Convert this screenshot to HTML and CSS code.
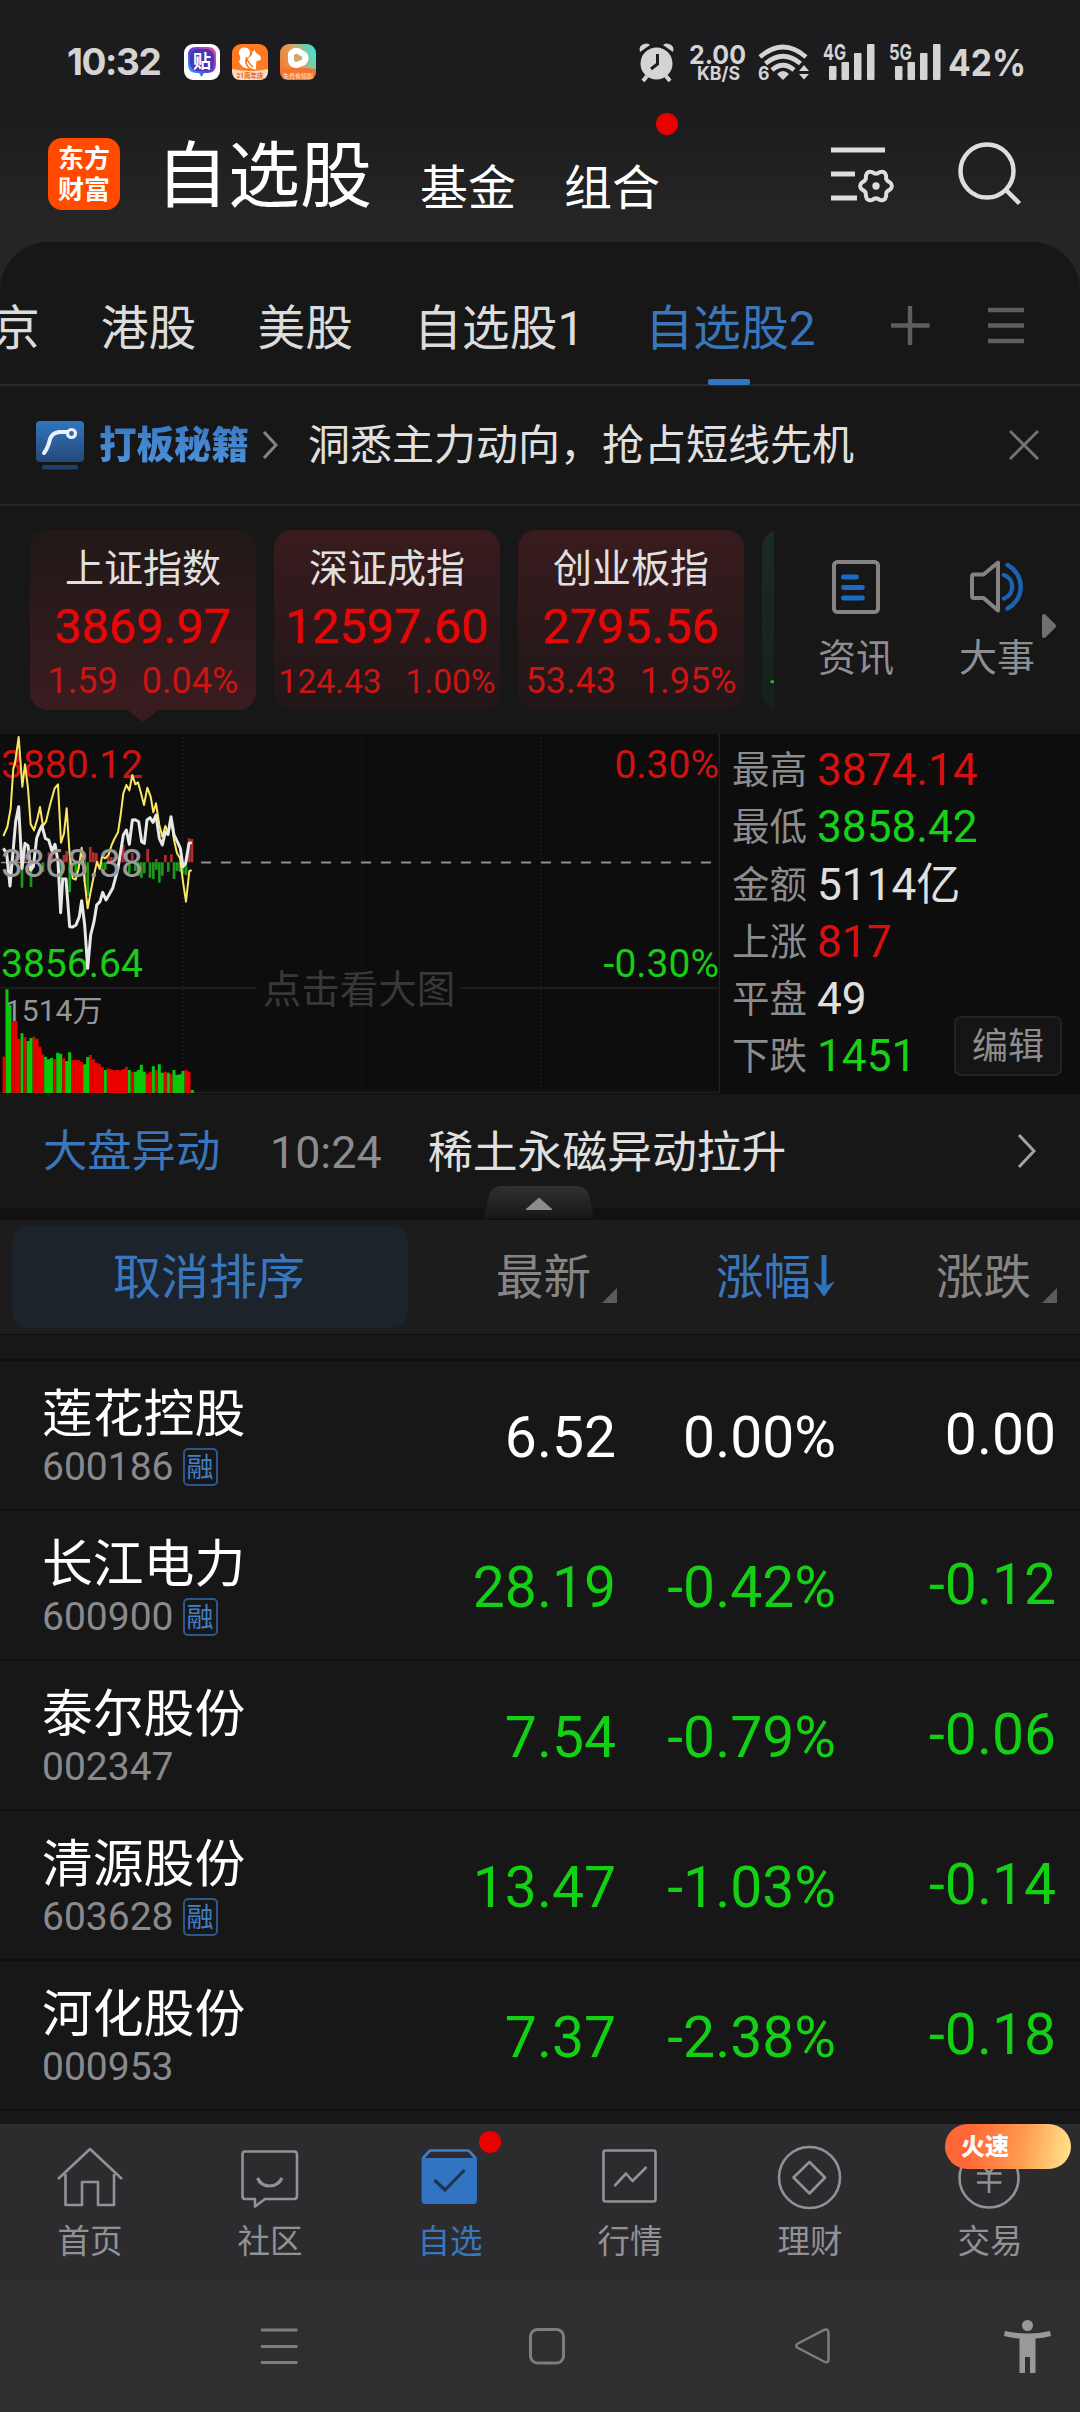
FILE: index.html
```html
<!DOCTYPE html>
<html lang="zh-CN">
<head>
<meta charset="utf-8">
<title>自选股</title>
<link rel="stylesheet" href="styles.css">
</head>
<body>
<div class="top">
  <div class="status">
    <span class="clock">10:32</span>
    <div class="apps">
      <svg width="36" height="36" viewBox="0 0 36 36">
        <defs><linearGradient id="tb" x1="0" y1="1" x2="1" y2="0"><stop offset="0" stop-color="#19b4ff"/><stop offset=".5" stop-color="#5a3be0"/><stop offset="1" stop-color="#ff4f8a"/></linearGradient></defs>
        <rect width="36" height="36" rx="9" fill="#fff"/>
        <path d="M12 3H24Q32 3 32 11V20Q32 28.500 24 29H20L17.500 33L15 29H12Q4 28.500 4 20V11Q4 3 12 3Z" fill="url(#tb)"/>
        <rect x="6" y="5" width="24" height="22" rx="8" fill="#4a35b4"/>
        <text x="18" y="23.500" font-size="18" text-anchor="middle" fill="#fff" class="b">贴</text>
      </svg>
      <svg width="36" height="36" viewBox="0 0 36 36">
        <rect width="36" height="36" rx="9" fill="#ff7b22"/>
        <path d="M0 25Q18 29 36 25V27Q36 36 27 36H9Q0 36 0 27Z" fill="#ffd9bd"/>
        <path d="M7 8Q8 3 13 3.500Q18 4 18 9Q17.500 13 13 15.500Q12.500 21 17 24.500Q9 24 7 17.500Q9 14.500 8 12Q6.500 10 7 8Z" fill="#fff"/>
        <path d="M20 11Q19.500 7 22.500 6Q23.500 9.500 26.500 10.500Q30 13 28.500 15.500Q26.500 17.500 24.500 16.500Q24 21 24 25.500Q17 25 15 19.500Q14.500 14.500 20 11Z" fill="#fff"/>
        <path d="M14 13Q17 20 21 23" fill="none" stroke="#ff7b22" stroke-width="1.500"/>
        <text x="18" y="33.500" font-size="6.500" text-anchor="middle" fill="#e8641c" class="b">21周年庆</text>
      </svg>
      <svg width="36" height="36" viewBox="0 0 36 36">
        <defs><linearGradient id="vd" x1="0" y1=".6" x2="1" y2=".2"><stop offset="0" stop-color="#f47a35"/><stop offset=".45" stop-color="#dca35f"/><stop offset=".9" stop-color="#52dcc4"/></linearGradient></defs>
        <rect width="36" height="36" rx="9" fill="url(#vd)"/>
        <path d="M0 25Q18 22 36 25V27Q36 36 27 36H9Q0 36 0 27Z" fill="#f47330"/>
        <path d="M13 8Q15 6 18 7L24 10.500Q27 14 24 18L17 21Q12 21 11 17V11Q11 9 13 8Z" fill="none" stroke="#fff" stroke-width="6"/>
        <text x="18" y="33.500" font-size="6" text-anchor="middle" fill="#ffe2cf">免费看短剧</text>
      </svg>
    </div>
    <svg class="sys" width="400" height="44" viewBox="636 40 400 44" fill="#d4d4d4">
      <circle cx="656.500" cy="63.500" r="16"/>
      <path d="M647 76L643 81M666 76L670 81" stroke="#d4d4d4" stroke-width="4"/>
      <path d="M640 52Q638 46 644 44Q648 42.500 650 45ZM673 52Q675 46 669 44Q665 42.500 663 45Z"/>
      <path d="M657.500 54V64L651 69" fill="none" stroke="#1c1c1e" stroke-width="3"/>
      <text x="689" y="63.500" font-size="26" textLength="57" lengthAdjust="spacingAndGlyphs" class="s">2.00</text>
      <text x="697" y="79.500" font-size="18.500" textLength="43" lengthAdjust="spacingAndGlyphs" class="s">KB/S</text>
      <g fill="none" stroke="#d4d4d4" stroke-width="4.600">
        <path d="M760 57Q783 37 806 57M765.500 63.500Q783 49 800.500 63.500M772 70Q783 60.500 794 70"/>
      </g>
      <path d="M777 74Q783 68 789 74L783 80ZM804 65L809 71H799ZM799 74H809L804 79.500Z"/>
      <text x="758" y="80" font-size="19" textLength="11.500" lengthAdjust="spacingAndGlyphs" class="s">6</text>
      <text x="823" y="59.500" font-size="22" textLength="23" lengthAdjust="spacingAndGlyphs" class="s">4G</text>
      <text x="889" y="59.500" font-size="22" textLength="23" lengthAdjust="spacingAndGlyphs" class="s">5G</text>
      <g id="bars"><rect x="829" y="66" width="7.500" height="14" rx="1"/><rect x="841.500" y="62" width="7.500" height="18" rx="1"/><rect x="854" y="53" width="7.500" height="27" rx="1"/><rect x="867" y="44" width="7.500" height="36" rx="1"/></g>
      <use href="#bars" x="66"/>
      <text x="948" y="76" font-size="37" textLength="78" lengthAdjust="spacingAndGlyphs" class="s">42%</text>
    </svg>
  </div>
  <header class="head">
    <div class="logo"><span>东方</span><span>财富</span></div>
    <h1>自选股</h1>
    <span class="seg">基金</span>
    <span class="seg dotted">组合<i class="dot"></i></span>
    <svg class="tool" width="68" height="64" viewBox="828 142 68 64" fill="none" stroke="#dedede">
      <path d="M831 150H885M831 174H855M831 198H857" stroke-width="5"/>
      <g transform="translate(876 186)"><path stroke-width="4" d="M13.800 -3.700Q18 0 13.800 3.700Q9.500 5.500 10.100 10.100Q9 15.600 3.700 13.800Q0 11 -3.700 13.800Q-9 15.600 -10.100 10.100Q-9.500 5.500 -13.800 3.700Q-18 0 -13.800 -3.700Q-9.500 -5.500 -10.100 -10.100Q-9 -15.600 -3.700 -13.800Q0 -11 3.700 -13.800Q9 -15.600 10.100 -10.100Q9.500 -5.500 13.800 -3.700Z"/><circle r="3.700" fill="#dedede" stroke="none"/></g>
    </svg>
    <svg class="tool2" width="68" height="68" viewBox="956 140 68 68" fill="none" stroke="#dedede" stroke-width="4.500">
      <circle cx="987" cy="171" r="26.500"/><path d="M1006 190L1019.500 203.500"/>
    </svg>
  </header>
</div>

<main class="panel">
  <nav class="tabs">
    <span>京</span><span>港股</span><span>美股</span><span>自选股1</span><span class="on">自选股2</span>
    <svg width="136" height="42" viewBox="892 304 136 42" stroke="#5e5e5e" stroke-width="4.400"><path d="M893 325.500H931.500M912 306V345M990 310H1026M990 325.500H1026M990 341H1026"/></svg>
  </nav>

  <div class="promo">
    <svg width="50" height="50" viewBox="0 0 50 50">
      <defs><linearGradient id="pg" x1="0" y1="0" x2="0" y2="1"><stop offset="0" stop-color="#3175c0"/><stop offset="1" stop-color="#24497a"/></linearGradient></defs>
      <rect x="1" y="1" width="48" height="41" rx="4" fill="url(#pg)"/>
      <rect x="7" y="45" width="36" height="4.500" rx="1.500" fill="#1d416b"/>
      <path d="M9 33Q13 28 15 19Q17 13 24 12H32" fill="none" stroke="#e8f2ff" stroke-width="4" stroke-linecap="round"/>
      <circle cx="36.500" cy="13.500" r="4" fill="none" stroke="#e8f2ff" stroke-width="3.200"/>
    </svg>
    <b>打板秘籍</b>
    <svg class="go" width="20" height="30" viewBox="0 0 20 30" fill="none" stroke="#858585" stroke-width="3"><path d="M3 2L15 15L3 28"/></svg>
    <span>洞悉主力动向，抢占短线先机</span>
    <svg class="close" width="32" height="32" viewBox="0 0 32 32" stroke="#757575" stroke-width="2.800"><path d="M2 2L30 30M30 2L2 30"/></svg>
  </div>

  <section class="market">
    <div class="cards">
      <div class="card sel"><span class="nm">上证指数</span><span class="val">3869.97</span><span class="chg"><i>1.59</i><i>0.04%</i></span></div>
      <div class="card"><span class="nm">深证成指</span><span class="val">12597.60</span><span class="chg sm"><i>124.43</i><i>1.00%</i></span></div>
      <div class="card"><span class="nm">创业板指</span><span class="val">2795.56</span><span class="chg"><i>53.43</i><i>1.95%</i></span></div>
      <div class="card down"><i>-</i></div>
    </div>
    <div class="links">
      <div class="link">
        <svg width="56" height="56" viewBox="0 0 56 56" fill="none" stroke="#848484" stroke-width="4"><rect x="6" y="3" width="44" height="50" rx="3.500"/><path d="M15.500 18H28.500M15.500 28.500H34.500M15.500 39H34.500" stroke="#1b6cc6" stroke-width="4.800" stroke-linecap="round"/></svg>
        <span>资讯</span>
      </div>
      <div class="link">
        <svg width="56" height="56" viewBox="0 0 56 56" fill="none" stroke="#848484" stroke-width="4"><path d="M29 3.500V51.500L14.500 39H5Q3 39 3 37V17.500Q3 15.500 5 15.500H14.500Z" stroke-linejoin="round"/><path d="M35 16A12.500 12.500 0 0 1 35 39.500M38.500 6A24.500 24.500 0 0 1 38.500 49.500" stroke="#1b62b4" stroke-width="4.400" stroke-linecap="round"/></svg>
        <span>大事</span>
      </div>
    </div>
    <svg class="more" width="16" height="26" viewBox="0 0 16 26"><path d="M3 3V23L13 13Z" fill="#707070" stroke="#707070" stroke-width="4" stroke-linejoin="round"/></svg>
  </section>

  <section class="quote">
    <svg class="chart" width="720" height="359" viewBox="0 734 720 359">
      <g stroke="#1b1b1b" stroke-width="1.500"><path stroke-dasharray="2 2" d="M183 737V1092M361.500 737V1092M541 737V1092"/><path stroke="#222" d="M0 988H257M461 988H720M0 1092.500H720M719.500 734V1093"/></g>
      <g transform="translate(0 725) scale(.33333)" fill="none">
        <path stroke="#b52c2c" stroke-width="8" d="M48 412V392M75 412V390M147 412V382M156 412V394M192 412V390M200 412V378M210 412V398M254 412V398M271 412V366M280 412V382M289 412V384M325 412V390M334 412V396M343 412V398M361 412V400M370 412V360M379 412V392M397 412V384M443 412V372M469 412V402M496 412V390M514 412V388M567 412V340M576 412V342"/>
        <path stroke="#1c981c" stroke-width="8" d="M30 412V450M66 412V488M93 412V486M129 412V440M183 412V462M209 412V502M227 412V462M236 412V430M254 412V472M263 412V512M307 412V436M316 412V434M388 412V444M406 412V438M415 412V452M424 412V458M433 412V445M450 412V458M460 412V462M469 412V434M478 412V473M487 412V452M505 412V440M522 412V462M531 412V438M540 412V440M549 412V446M558 412V450"/>
        <path stroke="#eb0000" stroke-width="9" d="M12 1104V995M39 1104V888M48 1104V888M57 1104V942M75 1104V937M102 1104V935M111 1104V942M120 1104V965M128 1104V988M164 1104V1002M191 1104V1000M218 1104V1005M227 1104V1005M236 1104V1006M245 1104V1011M271 1104V990M280 1104V1003M289 1104V1013M298 1104V1016M307 1104V1026M325 1104V1030M334 1104V1033M343 1104V1036M352 1104V1035M361 1104V1036M370 1104V1033M379 1104V1026M397 1104V1040M442 1104V1046M451 1104V1040M469 1104V1036M496 1104V1040M513 1104V1048M558 1104V1035M567 1104V1040"/>
        <path stroke="#09c909" stroke-width="9" d="M21 1104V793M30 1104V840M66 1104V925M84 1104V948M93 1104V939M137 1104V995M146 1104V1003M155 1104V999M173 1104V983M182 1104V986M200 1104V1008M209 1104V982M254 1104V1018M263 1104V996M316 1104V1035M388 1104V1035M406 1104V1040M415 1104V1035M424 1104V1019M433 1104V1040M460 1104V1024M478 1104V1018M487 1104V1043M505 1104V1043M522 1104V1035M531 1104V1050M540 1104V1048M549 1104V1038M577 1104V1095"/>
        <path stroke="#651600" stroke-width="1.500" opacity=".55" d="M16.500 995V1104M34.500 888V1104M43.500 888V1104M61.500 942V1104M70.500 937V1104M79.500 948V1104M106.500 942V1104M160 1002V1104M168 1002V1104M187 1000V1104M222 1005V1104M232 1006V1104M276 1003V1104M311 1035V1104M393 1040V1104M402 1040V1104M456 1040V1104M473 1036V1104M492 1043V1104M501 1043V1104"/>
      </g>
      <path d="M201 862.500H719" stroke="#919191" stroke-width="2.200" stroke-dasharray="10 10"/>
      <path d="M1 862.500H30" stroke="#919191" stroke-width="1.500"/>
      <g font-size="39">
        <text x="1" y="778" fill="#d11212">3880.12</text>
        <text x="1" y="977" fill="#18cc18">3856.64</text>
        <text x="719" y="778" fill="#d11212" text-anchor="end">0.30%</text>
        <text x="719" y="977" fill="#18cc18" text-anchor="end">-0.30%</text>
      </g>
      <g transform="translate(0 725) scale(.33333)" fill="none" stroke-linejoin="round">
        <path stroke="#fbe764" stroke-width="6" d="M10 333L22 306L32 250L40 130L45 115L56 36L67 185L75 118L84 190L92 298L102 316L112 282L120 246L129 303L138 290L150 240L164 190L174 178L183 353L192 325L200 250L209 390L218 460L227 464L236 430L245 368L254 470L263 550L272 500L282 450L291 410L299 432L306 395L316 400L326 388L335 360L345 338L354 322L362 270L370 205L379 180L388 196L397 150L406 178L414 172L423 205L432 240L442 188L452 215L460 262L468 235L478 300L487 335L496 303L505 325L513 280L522 345L531 385L540 400L549 470L558 530L568 438L575 436"/>
        <path stroke="#e8e8e8" stroke-width="9" d="M10 370L20 385L30 483L40 370L47 290L56 245L66 430L75 355L84 362L92 435L100 425L110 340L118 318L126 302L136 340L146 345L156 378L165 358L174 410L182 563L188 462L198 462L209 605L218 606L228 600L238 575L245 527L254 600L263 730L272 630L282 590L290 540L300 530L308 502L318 525L328 508L338 490L346 460L354 430L362 380L370 330L379 315L388 358L397 285L406 284L416 290L425 350L433 355L441 285L450 278L459 292L468 270L478 340L487 360L496 320L504 328L513 275L522 330L532 350L541 370L549 425L557 415L567 355L575 352"/>
      </g>
      <text x="1" y="877" fill="#9b9b9b" font-size="39">3868.38</text>
      <text x="5" y="1021" fill="#969696" font-size="30">1514万</text>
      <text x="359" y="1002.500" fill="#383838" font-size="38.500" text-anchor="middle">点击看大图</text>
    </svg>
    <dl class="stats">
      <div><dt>最高</dt><dd class="up">3874.14</dd></div>
      <div><dt>最低</dt><dd class="dn">3858.42</dd></div>
      <div><dt>金额</dt><dd>5114亿</dd></div>
      <div><dt>上涨</dt><dd class="up">817</dd></div>
      <div><dt>平盘</dt><dd>49</dd></div>
      <div><dt>下跌</dt><dd class="dn">1451</dd></div>
    </dl>
    <button class="edit">编辑</button>
  </section>

  <div class="alert">
    <span class="tag">大盘异动</span><time>10:24</time><span class="msg">稀土永磁异动拉升</span>
    <svg width="22" height="36" viewBox="0 0 22 36" fill="none" stroke="#a2a2a2" stroke-width="3"><path d="M3 2L18 18L3 34"/></svg>
    <svg class="fold" width="110" height="32" viewBox="0 0 110 32"><defs><linearGradient id="fg" x1="0" y1="0" x2="0" y2="1"><stop offset="0" stop-color="#303030"/><stop offset="1" stop-color="#181818"/></linearGradient></defs><path d="M0 32L4 13Q6 0 18 0H92Q104 0 106 13L110 32Z" fill="url(#fg)"/><path d="M55 12L68 23.500H42Z" fill="#8c8c8c" stroke="#8c8c8c" stroke-linejoin="round"/></svg>
  </div>

  <div class="cols">
    <button class="reset">取消排序</button>
    <span class="c1">最新<i class="tri"></i></span>
    <span class="c2">涨幅<svg width="24" height="44" viewBox="0 0 24 44"><path d="M12 1V34" stroke="#2f73be" stroke-width="5"/><path d="M1 27L12 33L23 27L12 43Z" fill="#2f73be"/></svg></span>
    <span class="c3">涨跌<i class="tri"></i></span>
  </div>
  <div class="sliver"></div>

  <div class="rows">
    <div class="row flat"><div class="who"><b>莲花控股</b><span>600186<em>融</em></span></div><span class="p">6.52</span><span class="r">0.00%</span><span class="d">0.00</span></div>
    <div class="row"><div class="who"><b>长江电力</b><span>600900<em>融</em></span></div><span class="p">28.19</span><span class="r">-0.42%</span><span class="d">-0.12</span></div>
    <div class="row"><div class="who"><b>泰尔股份</b><span>002347</span></div><span class="p">7.54</span><span class="r">-0.79%</span><span class="d">-0.06</span></div>
    <div class="row"><div class="who"><b>清源股份</b><span>603628<em>融</em></span></div><span class="p">13.47</span><span class="r">-1.03%</span><span class="d">-0.14</span></div>
    <div class="row"><div class="who"><b>河化股份</b><span>000953</span></div><span class="p">7.37</span><span class="r">-2.38%</span><span class="d">-0.18</span></div>
  </div>
</main>

<nav class="bottom">
  <div><svg width="68" height="68" viewBox="56 2144 68 68"><path d="M58 2179L90 2149L122 2179M65.500 2174V2205H82V2182H98V2205H114V2174"/></svg><span>首页</span></div>
  <div><svg width="68" height="68" viewBox="236 2144 68 68"><path d="M245 2151.500H294Q297 2151.500 297 2154.500V2196Q297 2199 294 2199H265L255 2206.500V2199H245Q242.500 2199 242.500 2196V2154.500Q242.500 2151.500 245 2151.500Z"/><path d="M257.500 2178Q261 2186 269.500 2186Q278 2186 282 2178" stroke-width="3.200"/></svg><span>社区</span></div>
  <div class="on"><svg width="68" height="68" viewBox="416 2144 68 68"><path d="M423 2158L430 2150.500H468.500L475.500 2158" stroke="#3f7fca"/><path d="M421.500 2158H477V2200Q477 2204 473 2204H425.500Q421.500 2204 421.500 2200Z" fill="#3074c2" stroke="none"/><path d="M434.500 2180L445 2190L464.500 2170" stroke="#1d3550" stroke-width="3.200"/></svg><span>自选</span><i class="dot"></i></div>
  <div><svg width="68" height="68" viewBox="596 2144 68 68"><rect x="603.500" y="2150.500" width="52" height="51" rx="2"/><path d="M614.500 2186L626 2173.500L632.500 2181L646.500 2167"/></svg><span>行情</span></div>
  <div><svg width="68" height="68" viewBox="776 2144 68 68"><circle cx="809.500" cy="2177.500" r="30.500"/><path d="M809.500 2162L825 2177.500L809.500 2193.500L793.500 2177.500Z"/></svg><span>理财</span></div>
  <div><svg width="68" height="68" viewBox="956 2144 68 68"><circle cx="989" cy="2178" r="29.500"/><path d="M978 2160L989 2173L1000 2160M989 2173V2193M977 2173.500H1001.500M977 2182.500H1001.500"/></svg><span>交易</span><em class="flash">火速</em></div>
</nav>
<div class="keys">
  <svg width="38" height="38" viewBox="260 2327 38 38"><path d="M261 2330H297.500M261 2346.500H297.500M261 2362.500H297.500"/></svg>
  <svg width="38" height="38" viewBox="528 2327 38 38"><rect x="530.500" y="2329.500" width="33" height="33.500" rx="7"/></svg>
  <svg width="38" height="38" viewBox="794 2327 38 38"><path d="M798 2343.500L824 2330Q828.500 2328 828.500 2333V2359Q828.500 2364 824 2361.500L798 2348Q794.500 2346 798 2343.500Z" stroke-width="2.500"/></svg>
  <svg width="50" height="56" viewBox="1002 2318 50 56"><g fill="#999" stroke="none"><circle cx="1027.500" cy="2325.500" r="5.500"/><path d="M1005 2331Q1027.500 2336 1050 2331L1051 2336Q1043 2338 1035.500 2338.500V2373H1030V2357H1025V2373H1019.500V2338.500Q1012 2338 1004 2336Z"/></g></svg>
</div>
</body>
</html>
```
FILE: styles.css
```css
* { box-sizing: border-box; }
body { margin: 0; width: 1080px; height: 2412px; overflow: hidden; background: #171717; color: #e0e0e0; font-family: Roboto, "Noto Sans CJK SC", sans-serif; line-height: 1.2; }
i, em { font-style: normal; }
h1, dl, dd { margin: 0; }
button { border: 0; padding: 0; font: inherit; color: inherit; background: none; }
svg { display: block; flex: none; }
span, b, time, dt, dd { white-space: nowrap; }
.b { font-weight: 700; }
.s { font-family: Inter, sans-serif; font-weight: 700; }
.dot { position: absolute; width: 22px; height: 22px; border-radius: 50%; background: #eb0000; }

.top { height: 290px; margin-bottom: -48px; background: linear-gradient(#1c1c1e 110px, #252525 220px); }
.status { height: 124px; padding: 40px 44px 40px 67px; display: flex; align-items: center; }
.clock { width: 117px; font: 700 37px/44px Inter, sans-serif; letter-spacing: -1.4px; color: #d4d4d4; }
.apps { display: flex; gap: 12px; }
.sys { margin-left: auto; }
.head { height: 118px; padding-left: 48px; display: flex; align-items: flex-start; }
.logo { width: 72px; height: 72px; margin-top: 14px; padding-top: 6px; border-radius: 14px; background: #ff4a00; color: #fff; display: flex; flex-direction: column; align-items: center; font-weight: 700; font-size: 26px; line-height: 31px; }
h1 { margin: 0 0 0 36px; width: 215px; font-size: 72px; line-height: 105px; font-weight: 400; color: #fff; white-space: nowrap; }
.seg { margin-left: 49px; position: relative; font-size: 48px; line-height: 130px; color: #fff; }
.seg + .seg { margin-left: 48px; }
.seg .dot { left: 92px; top: -11px; }
.tool { margin: 18px 0 0 168px; }
.tool2 { margin: 16px 0 0 60px; }

.panel { position: relative; height: 1882px; background: #171717; border-radius: 48px 48px 0 0; overflow: hidden; }
.tabs { height: 144px; padding-top: 27px; border-bottom: 2px solid #2b2b2b; display: flex; gap: 61px; align-items: center; font-size: 47.800px; color: #dcdcdc; }
.tabs span:first-child { margin-left: -8px; }
.tabs span { line-height: 120px; height: 116px; position: relative; }
.tabs svg { margin-left: 13.500px; margin-bottom: 3px; }
.on { color: #3a76bb; }
.tabs .on::after { content: ""; position: absolute; left: 63px; bottom: 0; width: 42px; height: 6px; border-radius: 2px; background: #3376c0; }

.promo { height: 120px; padding: 0 40px 0 35px; border-bottom: 2px solid #242424; display: flex; align-items: center; }
.promo b { margin-left: 14px; font-size: 37.500px; font-weight: 900; background: linear-gradient(#3a78c4, #4e94dc); -webkit-background-clip: text; color: transparent; }
.go { margin-left: 12px; }
.promo span { margin: 3px 0 0 27px; font-size: 42px; }
.close { margin-left: auto; }

.market { height: 228px; padding-top: 24px; display: flex; position: relative; }
.cards { width: 774px; height: 194px; padding-left: 30px; display: flex; gap: 18px; overflow: hidden; }
.card { flex: 0 0 226px; height: 180px; border-radius: 18px; background: linear-gradient(#391b1d, #201718); display: flex; flex-direction: column; align-items: center; position: relative; }
.card.sel { background: linear-gradient(#211818, #3a1c1f); }
.card.sel::after { content: ""; position: absolute; top: 180px; left: 98px; border: solid transparent; border-width: 12px 15px 0; border-top-color: #3a1c1f; }
.card.down { background: linear-gradient(#182c20, #17201b); }
.card.down i { position: absolute; left: 8px; top: 130px; color: #1bc51b; font-size: 35px; }
.nm { font-size: 39px; line-height: 48px; margin-top: 15px; }
.val { font-size: 48.500px; line-height: 57px; margin-top: 5px; color: #e60808; -webkit-text-stroke: .6px #e60808; }
.chg { display: flex; justify-content: center; gap: 24px; font-size: 36px; line-height: 40px; margin-top: 6px; color: #cc1414; }
.chg.sm { font-size: 33.500px; line-height: 41px; }
.links { display: flex; margin-left: 20px; gap: 27px; }
.link { width: 124px; margin-right: -10px; display: flex; flex-direction: column; align-items: center; padding-top: 29px; font-size: 38px; line-height: 48px; color: #8e8e93; }
.link span { margin-top: 19px; }
.more { position: absolute; left: 1041px; top: 107px; }

.quote { height: 360px; background: #0d0d0d; display: flex; position: relative; }
.chart { height: 359px; }
.stats { padding: 8px 0 0 12px; }
.stats div { display: flex; height: 57.300px; line-height: 57px; }
dt { width: 85px; font-size: 37.500px; color: #8c8c8c; }
dd { font-size: 44.200px; }
.up { color: #d81010; }
.dn { color: #18d018; }
.edit { position: absolute; left: 954px; top: 282px; width: 108px; height: 60px; padding-top: 3px; border: 2px solid #232323; border-radius: 7px; background: #151515; font-size: 36px; color: #8e8e8e; }

.alert { height: 126px; border-bottom: 12px solid #111; padding: 3px 42px 0 43px; display: flex; align-items: center; font-size: 44.800px; position: relative; }
.alert .tag { color: #3a76bb; width: 227px; font-size: 44.300px; }
.alert time { width: 158px; color: #8c8c90; }
.alert > svg:not(.fold) { margin: 0 0 3px auto; }
.fold { position: absolute; left: 484px; top: 92px; }

.cols { height: 115px; background: #1c1c1c; border-bottom: 1px solid #0e0e0e; display: flex; align-items: center; padding-left: 12px; font-size: 47.500px; color: #858585; }
.reset { width: 396px; height: 102px; border-radius: 16px; background: #1c232b; color: #3a76bb; font-size: 48px; padding: 2px 2px 0 0; }
.cols span { display: flex; align-items: center; position: relative; padding-top: 2px; }
.c1 { margin-left: 88px; }
.c2 { margin-left: 125px; color: #3a76bb; }
.c2 svg { margin: 0 0 4px 1px; }
.c3 { margin-left: 100px; }
.tri { position: absolute; left: 106px; bottom: 4px; border: solid transparent; border-width: 0 0 15px 15px; border-bottom-color: #5c5c5c; }
.sliver { height: 26px; border-bottom: 2px solid #0f0f0f; }

.row { height: 150px; border-bottom: 2px solid #0f0f0f; display: flex; font-size: 57px; line-height: 148px; color: #14d014; }
.row.flat { color: #fff; }
.who { width: 400px; padding: 21px 0 0 42px; color: #fff; }
.who b { display: block; font-size: 50.800px; font-weight: 400; line-height: 66px; }
.who span { display: flex; align-items: center; height: 38px; font-size: 39px; line-height: 38px; color: #8a8a8e; }
.who em { margin-left: 9px; width: 35px; height: 38px; border: 2px solid #2c5788; border-radius: 5px; font-size: 27px; line-height: 36px; text-align: center; color: #4580c6; }
.p { width: 216px; text-align: right; padding-top: 3px; }
.r { width: 220px; text-align: right; padding-top: 3px; }
.d { width: 220px; text-align: right; }
.row > span { height: 148px; }

.bottom { height: 156px; background: #2c2c2e; display: flex; }
.bottom div { width: 180px; padding-top: 20px; display: flex; flex-direction: column; align-items: center; position: relative; font-size: 32.500px; line-height: 40px; color: #929296; }
.bottom svg { fill: none; stroke: #929296; stroke-width: 2.600; stroke-linejoin: round; }
.bottom span { margin-top: 10px; }
.bottom .on { color: #3a76bb; }
.bottom .dot { left: 119px; top: 7px; }
.flash { position: absolute; left: 45px; top: 0; width: 126px; height: 45px; padding-left: 16px; border-radius: 23px; background: linear-gradient(100deg, #ff6636 20%, #ff9a50 60%, #ffe88e); color: #fff; font-size: 24px; line-height: 47px; font-weight: 900; }
.keys { height: 132px; background: #2f2f2f; padding-left: 260px; display: flex; align-items: center; }
.keys svg { fill: none; stroke: #7d7d7d; stroke-width: 3; }
.keys svg:nth-child(2) { margin-left: 230px; }
.keys svg:nth-child(3) { margin-left: 228px; }
.keys svg:nth-child(4) { margin-left: 170px; }
```
